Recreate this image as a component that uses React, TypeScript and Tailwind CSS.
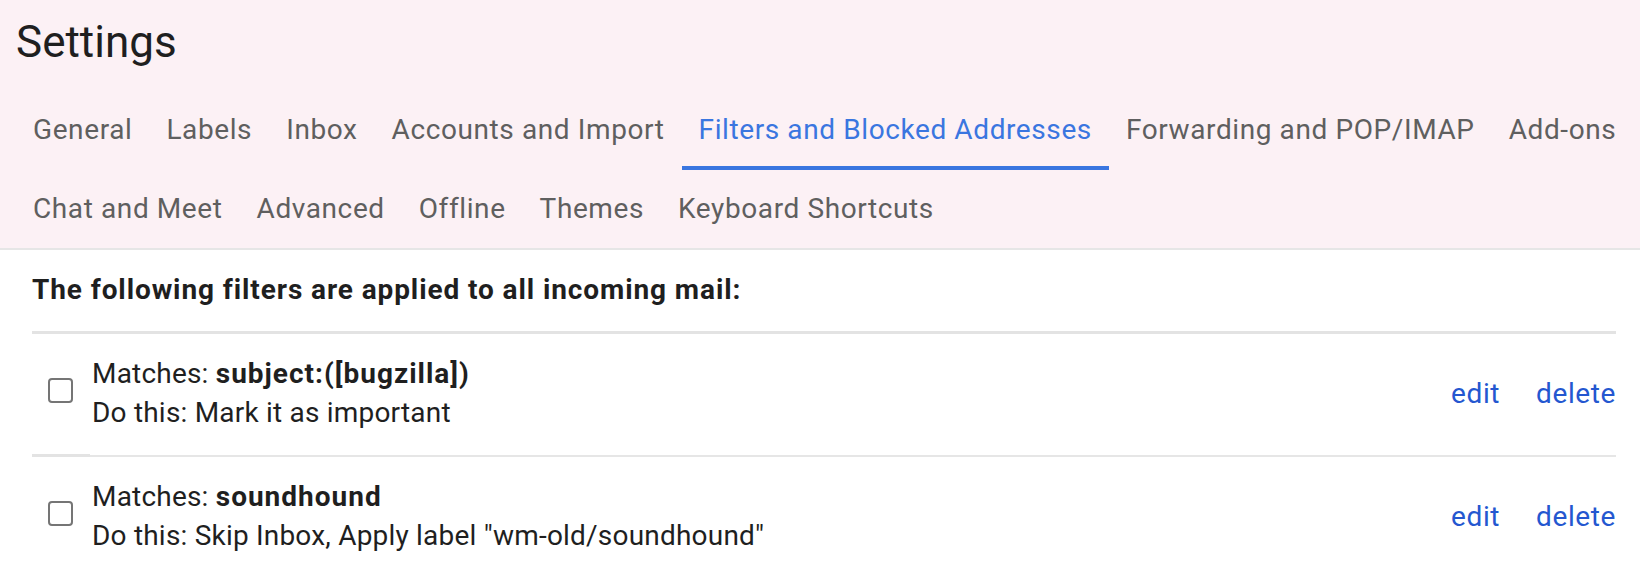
const rowOne = [
  "General",
  "Labels",
  "Inbox",
  "Accounts and Import",
  "Filters and Blocked Addresses",
  "Forwarding and POP/IMAP",
  "Add-ons",
];

const rowTwo = ["Chat and Meet", "Advanced", "Offline", "Themes", "Keyboard Shortcuts"];

const ACTIVE = "Filters and Blocked Addresses";

type Filter = {
  id: string;
  matches: string;
  action: string;
};

const filters: Filter[] = [
  { id: "bugzilla", matches: "subject:([bugzilla])", action: "Mark it as important" },
  { id: "soundhound", matches: "soundhound", action: 'Skip Inbox, Apply label "wm-old/soundhound"' },
];

function Tab({ label }: { label: string }) {
  const active = label === ACTIVE;
  return (
    <button
      type="button"
      className={`flex h-full items-center border-b-4 px-[17px] pt-1 text-[28px] tracking-[0.6px] whitespace-nowrap ${
        active ? "border-[#3a76e0] text-[#3a76e0]" : "border-transparent text-[#5f5f5f]"
      }`}
    >
      {label}
    </button>
  );
}

function FilterRow({ filter }: { filter: Filter }) {
  return (
    <li className="flex items-center pt-[20px] pb-[22px] text-[28px] leading-[39px] tracking-[0.2px] text-[#1f1f1f]">
      <span className="ml-4 mt-[-6px] h-[25px] w-[25px] shrink-0 rounded-[4px] border-2 border-[#757575]" />
      <div className="ml-[19px] flex-1">
        <p>
          Matches: <span className="font-bold tracking-[1px]">{filter.matches}</span>
        </p>
        <p>Do this: {filter.action}</p>
      </div>
      <div className="flex gap-[36px] tracking-[0.6px] text-[#2457d0]">
        <a href="#">edit</a>
        <a href="#">delete</a>
      </div>
    </li>
  );
}

export default function App() {
  return (
    <div className="h-[562px] w-[1640px] overflow-hidden bg-white font-['Roboto','Liberation_Sans',sans-serif]">
      <header className="border-b-2 border-[#e6e6e6] bg-[#fcf1f5]">
        <h1 className="h-[90px] pl-[16px] text-[44px] leading-[84px] text-[#1f1f1f]">Settings</h1>
        <nav className="pl-4">
          <div className="flex h-[80px]">
            {rowOne.map((t) => (
              <Tab key={t} label={t} />
            ))}
          </div>
          <div className="flex h-[78px]">
            {rowTwo.map((t) => (
              <Tab key={t} label={t} />
            ))}
          </div>
        </nav>
      </header>

      <section className="pl-8 pr-6 pt-[20px]">
        <h2 className="text-[28px] font-bold leading-[39px] tracking-[0.9px] text-[#1f1f1f]">
          The following filters are applied to all incoming mail:
        </h2>
        <div className="mt-[22px] h-[3px] bg-[#e3e3e3]" />
        <ul>
          {filters.map((f, i) => (
            <div key={f.id}>
              {i > 0 && (
                <div className="flex items-start">
                  <div className="h-[3px] w-[58px] bg-[#e3e3e3]" />
                  <div className="mt-px h-[2px] flex-1 bg-[#e6e6e6]" />
                </div>
              )}
              <FilterRow filter={f} />
            </div>
          ))}
        </ul>
      </section>
    </div>
  );
}
